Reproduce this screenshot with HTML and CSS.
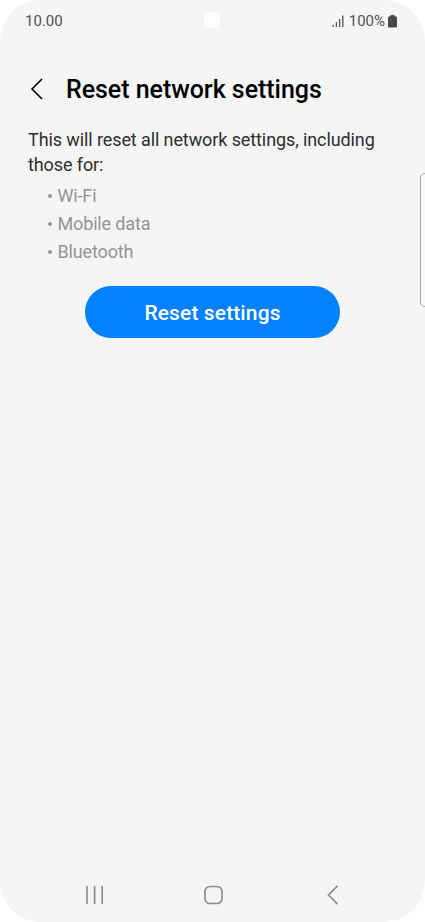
FILE: index.html
```html
<!DOCTYPE html>
<html lang="en">
<head>
<meta charset="utf-8">
<title>Reset network settings</title>
<link rel="stylesheet" href="styles.css">
</head>
<body>
<div class="phone">
  <header class="status">
    <span class="time">10.00</span>
    <span class="indicators">
      <svg class="signal" width="12" height="12" viewBox="0 0 12 12"><path d="M1.2 10v2M4.4 7v5M7.6 4v8M10.8 .5V12"/></svg>
      <span class="percent">100%</span>
      <svg class="battery" width="9" height="13" viewBox="0 0 9 13"><path d="M2.5 0h4v1.3h.8Q9 1.3 9 3v8.3Q9 12.5 7.8 12.5H1.2Q0 12.5 0 11.3V3Q0 1.3 1.7 1.3h.8z"/></svg>
    </span>
    <span class="camera"></span>
  </header>
  <main class="content">
    <div class="heading">
      <svg class="back" width="14" height="24" viewBox="0 0 14 24"><path d="M12 2L2 12l10 10"/></svg>
      <h1>Reset network settings</h1>
    </div>
    <p class="intro">This will reset all network settings, including<br>those for:</p>
    <ul class="items">
      <li>Wi-Fi</li>
      <li>Mobile data</li>
      <li>Bluetooth</li>
    </ul>
    <button class="reset">Reset settings</button>
  </main>
  <nav class="nav">
    <svg width="20" height="20" viewBox="0 0 20 20"><path d="M2 1v18M9.6 1v18M17.2 1v18"/></svg>
    <svg width="20" height="20" viewBox="0 0 20 20"><rect x="1" y="1.5" width="17" height="17" rx="5"/></svg>
    <svg width="20" height="20" viewBox="0 0 20 20"><path d="M14.5 .8L5.5 10l9 9.2"/></svg>
  </nav>
  <div class="edge"></div>
</div>
</body>
</html>
```
FILE: styles.css
```css
* { box-sizing: border-box; }
body { margin: 0; background: #fff; font-family: Roboto, sans-serif; }
.phone {
  position: relative;
  display: flex;
  flex-direction: column;
  width: 425px;
  height: 922px;
  overflow: hidden;
  border-radius: 41px;
  background: #f5f5f5;
}
.status {
  position: relative;
  display: flex;
  justify-content: space-between;
  align-items: center;
  height: 42px;
  padding: 0 28px 0 25px;
  color: #505050;
  font-size: 15px;
}
.indicators { display: flex; align-items: center; }
.signal { margin-right: 5px; fill: none; stroke: #555; stroke-width: 1.3; }
.battery { margin-left: 3px; fill: #484848; }
.camera {
  position: absolute;
  left: 204px;
  top: 12px;
  width: 16px;
  height: 16px;
  border-radius: 50%;
  background: #fff;
}
.content { flex: 1; padding: 30px 28px 0; }
.heading { display: flex; align-items: center; height: 34px; }
.back { margin: 0 22px 0 2px; fill: none; stroke: #000; stroke-width: 1.6; }
h1 { margin: 2px 0 0; font-size: 25px; line-height: 34px; font-weight: 500; letter-spacing: -0.04px; color: #000; white-space: nowrap; }
.intro { margin: 21px 0 0; font-size: 18px; line-height: 25px; letter-spacing: -0.1px; color: #2e2e2e; white-space: nowrap; }
.items { margin: 5px 0 0; padding: 0 0 0 19px; list-style: none; font-size: 18px; line-height: 28px; letter-spacing: -0.15px; color: #949494; }
.items li { display: flex; align-items: center; }
.items li::before { content: ""; width: 4px; height: 4px; margin: 0 5.5px 0 1px; border-radius: 50%; background: #949494; }
.reset {
  display: block;
  width: 255px;
  height: 52px;
  margin: 20px auto 0;
  padding: 2px 0 0;
  border: 0;
  border-radius: 26px;
  background: #0381fe;
  color: #fff;
  font: 500 21px Roboto, sans-serif;
  letter-spacing: 0.12px;
}
.nav { display: flex; justify-content: space-between; padding: 0 82px 17px 85px; }
.nav svg { fill: none; stroke: #8e8e8e; stroke-width: 1.7; }
.edge {
  position: absolute;
  left: 420px;
  top: 173px;
  width: 12px;
  height: 134px;
  border: 1px solid #a8a8a8;
  border-radius: 5px;
  background: #fafafa;
}
```
